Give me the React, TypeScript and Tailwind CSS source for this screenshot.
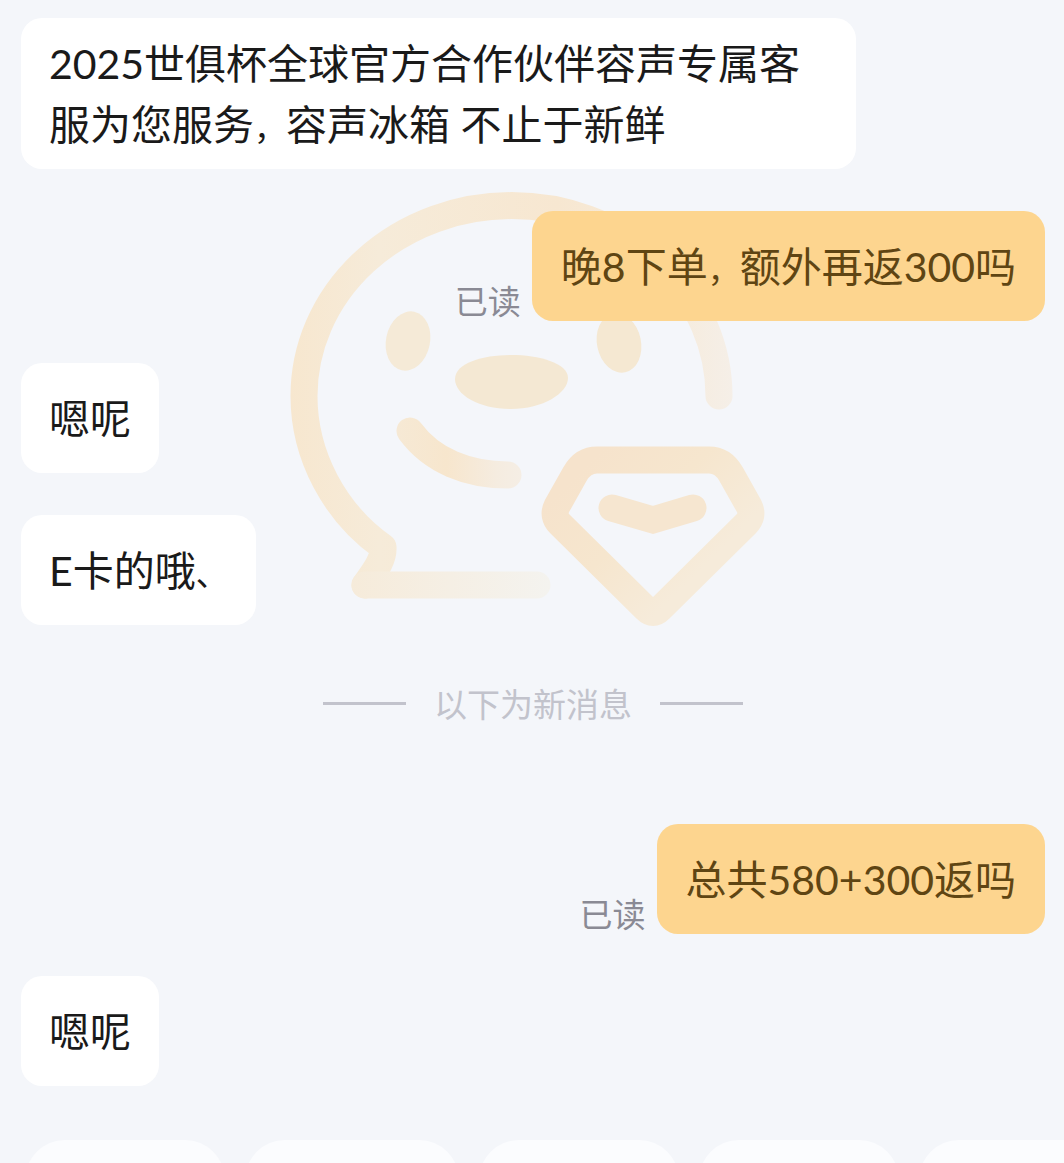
import clsx from "clsx";
import { Fragment } from "react";

type Message = {
  id: number;
  from: "shop" | "me";
  text: string;
};

const earlier: Message[] = [
  {
    id: 1,
    from: "shop",
    text: "2025世俱杯全球官方合作伙伴容声专属客服为您服务，容声冰箱 不止于新鲜",
  },
  { id: 2, from: "me", text: "晚8下单，额外再返300吗" },
  { id: 3, from: "shop", text: "嗯呢" },
  { id: 4, from: "shop", text: "E卡的哦、" },
];

const latest: Message[] = [
  { id: 5, from: "me", text: "总共580+300返吗" },
  { id: 6, from: "shop", text: "嗯呢" },
];

const shortcutWidths = ["w-[200px]", "w-[214px]", "w-[200px]", "w-[200px]", "w-[200px]"];

// Full-width punctuation is set a size smaller than the ideographs around it
function MessageText({ text }: { text: string }) {
  return (
    <p>
      {text.split(/([，、])/).map((part, i) =>
        part === "，" || part === "、" ? (
          <span key={i} className="text-[32px] leading-none">
            {part}
          </span>
        ) : (
          <Fragment key={i}>{part}</Fragment>
        )
      )}
    </p>
  );
}

function MessageRow({ message }: { message: Message }) {
  const mine = message.from === "me";
  return (
    <li className={clsx("flex items-end gap-[11px]", mine && "justify-end")}>
      {mine && (
        <span className="shrink-0 text-[33px] leading-10 text-[#8a8a94]">已读</span>
      )}
      <div
        className={clsx(
          "flex min-h-[110px] max-w-[835px] items-center rounded-[21px] pt-[15px] pb-[14px] text-[41px] leading-[61px]",
          mine ? "bg-[#fdd58f] px-[29px] text-[#5f4513]" : "bg-white px-7 text-[#1a1a1a]"
        )}
      >
        <MessageText text={message.text} />
      </div>
    </li>
  );
}

function NewMessagesDivider() {
  return (
    <div className="mb-[42px] flex h-[73px] items-center justify-center gap-7">
      <span className="h-[3px] w-[83px] bg-[#c2c3cc]" />
      <span className="text-[33px] leading-10 text-[#c2c3cc]">以下为新消息</span>
      <span className="h-[3px] w-[83px] bg-[#c2c3cc]" />
    </div>
  );
}

function Watermark() {
  return (
    <svg
      viewBox="282 185 500 450"
      className="absolute top-[185px] left-1/2 h-[450px] w-[500px] -translate-x-1/2"
      fill="none"
      strokeWidth="27"
      strokeLinecap="round"
      aria-hidden="true"
    >
      <defs>
        <linearGradient id="head" gradientUnits="userSpaceOnUse" x1="290" y1="0" x2="735" y2="0">
          <stop offset="0" stopColor="#f7e7cf" />
          <stop offset="0.2" stopColor="#f6ebd9" />
          <stop offset="0.6" stopColor="#f7e7d1" />
          <stop offset="0.85" stopColor="#f6ebdb" />
          <stop offset="1" stopColor="#f5efe8" />
        </linearGradient>
        <linearGradient id="tail" gradientUnits="userSpaceOnUse" x1="350" y1="0" x2="551" y2="0">
          <stop offset="0" stopColor="#f6ebda" />
          <stop offset="1" stopColor="#f4f3ef" />
        </linearGradient>
        <linearGradient id="smile" gradientUnits="userSpaceOnUse" x1="396" y1="0" x2="522" y2="0">
          <stop offset="0" stopColor="#f6e9d5" />
          <stop offset="0.4" stopColor="#f7e6cd" />
          <stop offset="0.8" stopColor="#f5ece0" />
          <stop offset="1" stopColor="#f5eee5" />
        </linearGradient>
        <linearGradient id="gem" gradientUnits="userSpaceOnUse" x1="590" y1="460" x2="700" y2="570">
          <stop offset="0" stopColor="#f6e3cc" />
          <stop offset="0.5" stopColor="#f6e6ce" />
          <stop offset="1" stopColor="#f6ebda" />
        </linearGradient>
      </defs>

      {/* Speech bubble outline */}
      <path
        d="M719 396 A207 190 0 0 0 304 396 C304 456 335 513 383 547 C384 560 374 572 365 585"
        stroke="url(#head)"
        strokeLinejoin="round"
      />
      <path d="M365 585 H537" stroke="url(#tail)" />

      {/* Face */}
      <ellipse cx="408" cy="341" rx="22" ry="30" transform="rotate(12 408 341)" fill="#f5ead7" />
      <ellipse cx="619" cy="343" rx="22" ry="30" transform="rotate(-12 619 343)" fill="#f5e8d2" />
      <path
        d="M455 379 C455 363 483 355 511 355 S568 363 568 378 S543 409 511 409 S455 395 455 379Z"
        fill="#f4e8d3"
      />
      <path d="M410 431 C432 461 468 475 508 475" stroke="url(#smile)" />

      {/* Gem */}
      <path
        d="M597 460 H709 Q723 460 731 474 L749 506 Q754 516 746 524 L660 609 Q653 616 646 609 L560 524 Q552 516 557 506 L575 474 Q583 460 597 460Z"
        stroke="url(#gem)"
      />
      <path d="M612 508 L653 520 L693 508" stroke="#f6e6d0" />
    </svg>
  );
}

export default function App() {
  return (
    <main
      lang="zh-CN"
      className="relative flex min-h-screen flex-col overflow-hidden bg-[#f4f6fa] font-[Lato,'Noto_Sans_CJK_SC',sans-serif]"
    >
      <Watermark />

      <div className="relative flex flex-col gap-[42px] pt-[18px] pr-[19px] pl-[21px]">
        <ul className="flex flex-col gap-[42px]">
          {earlier.map((m) => (
            <MessageRow key={m.id} message={m} />
          ))}
        </ul>
        <NewMessagesDivider />
        <ul className="flex flex-col gap-[42px]">
          {latest.map((m) => (
            <MessageRow key={m.id} message={m} />
          ))}
        </ul>
      </div>

      {/* Shortcut chips peeking in at the bottom edge */}
      <div className="relative mt-[54px] flex h-[23px] gap-5 overflow-hidden pl-[25px]">
        {shortcutWidths.map((width, i) => (
          <div key={i} className={clsx("h-20 shrink-0 rounded-full bg-[#fbfcfe]", width)} />
        ))}
      </div>
    </main>
  );
}
